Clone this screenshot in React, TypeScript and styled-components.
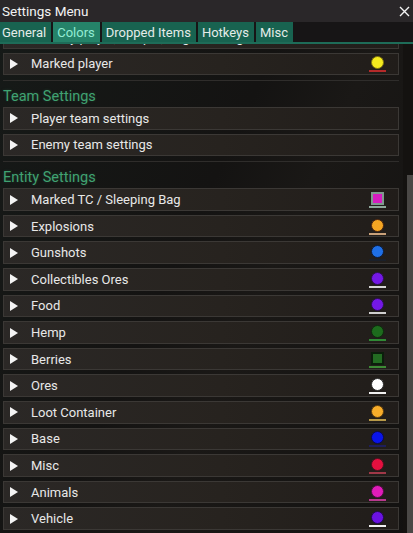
import React from "react";
import styled, { createGlobalStyle } from "styled-components";

const GlobalStyle = createGlobalStyle`
  html, body {
    margin: 0;
    padding: 0;
    background: #131211;
  }
  body {
    font-family: Roboto, "Noto Sans", "Liberation Sans", sans-serif;
    color: #e6e6e6;
  }
`;

const Window = styled.div`
  width: 413px;
  height: 533px;
  display: flex;
  flex-direction: column;
  overflow: hidden;
  background: linear-gradient(115deg, #161a18 0%, #141312 45%, #1a1816 60%, #121110 100%);
`;

const TitleBar = styled.div`
  height: 22px;
  display: flex;
  align-items: center;
  justify-content: space-between;
  padding: 0 3px 0 2px;
  background: #2a2729;
  font-size: 13.5px;
  color: #f2f2f2;
`;

const CloseButton = styled.svg`
  width: 11px;
  height: 11px;
  stroke: #f4f4f4;
  stroke-width: 1.4;
`;

const TabBar = styled.div`
  height: 20px;
  display: flex;
  gap: 2px;
  background: #171516;
  border-bottom: 2px solid #1e6c58;
`;

const Tab = styled.div<{ $active?: boolean }>`
  display: flex;
  align-items: center;
  padding: 0 5px 0 4px;
  font-size: 13px;
  background: ${({ $active }) => ($active ? "#258369" : "#186350")};
  color: ${({ $active }) => ($active ? "#93ecd4" : "#e4ece9")};

  &:first-child {
    padding-left: 2px;
  }
`;

const Body = styled.div`
  flex: 1;
  min-height: 0;
  display: flex;
`;

const Viewport = styled.div`
  flex: 1;
  min-width: 0;
  overflow: hidden;
  display: flex;
  flex-direction: column;
  justify-content: flex-end;
`;

const List = styled.div`
  display: flex;
  flex-direction: column;
  padding: 0 4px 3px 3px;
`;

const Track = styled.div`
  width: 10px;
  display: flex;
  flex-direction: column;
  justify-content: flex-end;
  align-items: flex-end;
  background: #141210;
`;

const Thumb = styled.div`
  width: 6px;
  height: 358px;
  background: #4a4846;
`;

const Header = styled.div`
  margin-top: 5px;
  border-top: 1px solid #2f2d2b;
  padding-top: 7px;
  margin-bottom: 1px;
  line-height: 18px;
  font-size: 14.5px;
  color: #40a272;
  text-shadow: 0 0 3px rgba(64, 162, 114, 0.25);
`;

const Row = styled.div`
  height: 22.6px;
  box-sizing: border-box;
  flex-shrink: 0;
  display: flex;
  align-items: center;
  padding: 0 12px 0 6px;
  border: 1px solid #3b3835;
  background: linear-gradient(90deg, #2b2826 0%, #27231f 55%, #211d1a 100%);
  font-size: 13px;
  color: #e8e8e8;

  & + & {
    margin-top: 4px;
  }
`;

const Arrow = styled.svg`
  width: 8px;
  height: 10px;
  fill: #f4f4f4;
  flex-shrink: 0;
`;

const Label = styled.span`
  flex: 1;
  margin-left: 13px;
  white-space: nowrap;
`;

const Swatch = styled.div`
  width: 17px;
  display: flex;
  flex-direction: column;
  align-items: center;
  gap: 1px;
  margin-top: 1px;
`;

const Dot = styled.div<{ $fill: string; $ring: string; $square?: boolean }>`
  width: 13px;
  height: 13px;
  box-sizing: border-box;
  border-radius: ${({ $square }) => ($square ? "0" : "50%")};
  border: ${({ $square }) => ($square ? "2px" : "1.5px")} solid ${({ $ring }) => $ring};
  background: ${({ $fill }) => $fill};
`;

const Underline = styled.div<{ $color: string }>`
  width: 17px;
  height: 2px;
  background: ${({ $color }) => $color};
`;

type Item = {
  label: string;
  fill?: string;
  ring?: string;
  line?: string;
  square?: boolean;
};

type Section = { title?: string; items: Item[] };

const sections: Section[] = [
  {
    items: [
      { label: "Friendly player, sleeper, target settings" },
      { label: "Marked player", fill: "#f3ea1e", ring: "#7e7212", line: "#b52a2a" },
    ],
  },
  {
    title: "Team Settings",
    items: [{ label: "Player team settings" }, { label: "Enemy team settings" }],
  },
  {
    title: "Entity Settings",
    items: [
      { label: "Marked TC / Sleeping Bag", fill: "#d61cc0", ring: "#7f9a8e", line: "#8fa89c", square: true },
      { label: "Explosions", fill: "#f5a623", ring: "#4a2410", line: "#c9a17a" },
      { label: "Gunshots", fill: "#1f6fe6", ring: "#0e1c38", line: "#1a202a" },
      { label: "Collectibles Ores", fill: "#7418e6", ring: "#2a1050", line: "#d6d6d6" },
      { label: "Food", fill: "#7418e6", ring: "#2a1050", line: "#d0d0d0" },
      { label: "Hemp", fill: "#1d6b1d", ring: "#0e2a0e", line: "#2f8a35" },
      { label: "Berries", fill: "#236c22", ring: "#0c1e0c", line: "#3d8a35", square: true },
      { label: "Ores", fill: "#ffffff", ring: "#2c2c2c", line: "#f0f0f0" },
      { label: "Loot Container", fill: "#f7ad2a", ring: "#5a3c10", line: "#b89a48" },
      { label: "Base", fill: "#0a14e8", ring: "#0a0a4a", line: "#1e1e5a" },
      { label: "Misc", fill: "#e5103f", ring: "#4e1020", line: "#a03848" },
      { label: "Animals", fill: "#e01cb9", ring: "#4e1040", line: "#b8388e" },
      { label: "Vehicle", fill: "#6b12e2", ring: "#1e0a4e", line: "#f0f0f0" },
    ],
  },
];

const App: React.FC = () => {
  return (
    <>
      <GlobalStyle />
      <Window>
        <TitleBar>
          <span>Settings Menu</span>
          <CloseButton viewBox="0 0 11 11">
            <path d="M1 1 L10 10 M10 1 L1 10" />
          </CloseButton>
        </TitleBar>
        <TabBar>
          <Tab>General</Tab>
          <Tab $active>Colors</Tab>
          <Tab>Dropped Items</Tab>
          <Tab>Hotkeys</Tab>
          <Tab>Misc</Tab>
        </TabBar>
        <Body>
          <Viewport>
            <List>
              {sections.map((section, i) => (
                <React.Fragment key={i}>
                  {section.title && <Header>{section.title}</Header>}
                  {section.items.map((item) => (
                    <Row key={item.label}>
                      <Arrow viewBox="0 0 8 10">
                        <polygon points="0,0 8,5 0,10" />
                      </Arrow>
                      <Label>{item.label}</Label>
                      {item.fill && (
                        <Swatch>
                          <Dot $fill={item.fill} $ring={item.ring ?? "#000"} $square={item.square} />
                          <Underline $color={item.line ?? "#fff"} />
                        </Swatch>
                      )}
                    </Row>
                  ))}
                </React.Fragment>
              ))}
            </List>
          </Viewport>
          <Track>
            <Thumb />
          </Track>
        </Body>
      </Window>
    </>
  );
};

export default App;
